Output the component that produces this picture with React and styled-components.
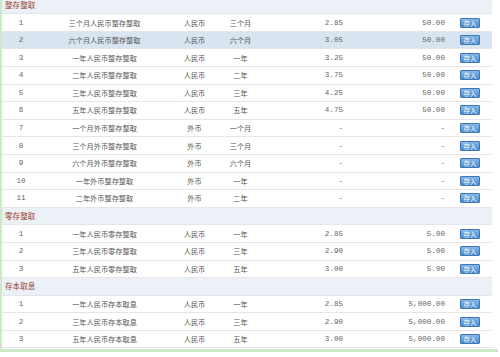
import React from "react";
import styled, { createGlobalStyle } from "styled-components";

const Global = createGlobalStyle`
  html, body { margin: 0; padding: 0; background: #fff; overflow: hidden; }
  body { font-family: "Noto Sans CJK SC", "Liberation Sans", sans-serif; }
`;

const Frame = styled.div`
  width: 498px;
  height: 352px;
  box-sizing: border-box;
  border-left: 2px solid #cfe8c8;
  border-bottom: 3px solid #cfe8c8;
  overflow: hidden;
`;

const Table = styled.div`
  width: 490px;
  margin-top: -3.4px;
  display: flex;
  flex-direction: column;
`;

const SectionRow = styled.div`
  height: 17.6px;
  box-sizing: border-box;
  background: #ecf1f7;
  border-bottom: 1px solid #e2e7ee;
  color: #9a3f2e;
  font-size: 7.6px;
  line-height: 16.6px;
  padding-left: 3px;
`;

const Row = styled.div`
  height: 17.6px;
  box-sizing: border-box;
  display: grid;
  grid-template-columns: 38px 129px 51px 41px 86px 102px 1fr;
  align-items: center;
  background: ${(p) => (p.$hi ? "#d8e4f0" : "#fff")};
  border-bottom: 1px solid #e6e6e6;
  color: #555;
  font-size: 7.2px;
`;

const Cell = styled.div`
  text-align: ${(p) => p.$align || "center"};
  padding-right: ${(p) => (p.$align === "right" ? "4px" : "0")};
  white-space: nowrap;
`;

const Num = styled(Cell)`
  font-family: "Liberation Mono", "DejaVu Sans Mono", monospace;
  font-size: 7.6px;
  color: #666;
`;

const BtnCell = styled.div`
  padding-left: 11px;
  display: flex;
  align-items: center;
`;

const Btn = styled.div`
  width: 20px;
  height: 10px;
  box-sizing: border-box;
  border: 1px solid #3d77b5;
  border-radius: 1px;
  background: linear-gradient(#86b8e6, #4a8ccb);
  color: #fff;
  font-size: 6.5px;
  line-height: 8px;
  text-align: center;
`;

const sections = [
  {
    title: "整存整取",
    rows: [
      ["1", "三个月人民币整存整取", "人民币", "三个月", "2.85", "50.00"],
      ["2", "六个月人民币整存整取", "人民币", "六个月", "3.05", "50.00", true],
      ["3", "一年人民币整存整取", "人民币", "一年", "3.25", "50.00"],
      ["4", "二年人民币整存整取", "人民币", "二年", "3.75", "50.00"],
      ["5", "三年人民币整存整取", "人民币", "三年", "4.25", "50.00"],
      ["6", "五年人民币整存整取", "人民币", "五年", "4.75", "50.00"],
      ["7", "一个月外币整存整取", "外币", "一个月", "-", "-"],
      ["8", "三个月外币整存整取", "外币", "三个月", "-", "-"],
      ["9", "六个月外币整存整取", "外币", "六个月", "-", "-"],
      ["10", "一年外币整存整取", "外币", "一年", "-", "-"],
      ["11", "二年外币整存整取", "外币", "二年", "-", "-"],
    ],
  },
  {
    title: "零存整取",
    rows: [
      ["1", "一年人民币零存整取", "人民币", "一年", "2.85", "5.00"],
      ["2", "三年人民币零存整取", "人民币", "三年", "2.90", "5.00"],
      ["3", "五年人民币零存整取", "人民币", "五年", "3.00", "5.00"],
    ],
  },
  {
    title: "存本取息",
    rows: [
      ["1", "一年人民币存本取息", "人民币", "一年", "2.85", "5,000.00"],
      ["2", "三年人民币存本取息", "人民币", "三年", "2.90", "5,000.00"],
      ["3", "五年人民币存本取息", "人民币", "五年", "3.00", "5,000.00"],
    ],
  },
];

export default function App() {
  return (
    <>
      <Global />
      <Frame>
        <Table>
          {sections.map((s) => (
            <React.Fragment key={s.title}>
              <SectionRow>{s.title}</SectionRow>
              {s.rows.map((r) => (
                <Row key={s.title + r[0]} $hi={r[6]}>
                  <Num>{r[0]}</Num>
                  <Cell>{r[1]}</Cell>
                  <Cell>{r[2]}</Cell>
                  <Cell>{r[3]}</Cell>
                  <Num $align="right">{r[4]}</Num>
                  <Num $align="right">{r[5]}</Num>
                  <BtnCell>
                    <Btn>存入</Btn>
                  </BtnCell>
                </Row>
              ))}
            </React.Fragment>
          ))}
        </Table>
      </Frame>
    </>
  );
}
